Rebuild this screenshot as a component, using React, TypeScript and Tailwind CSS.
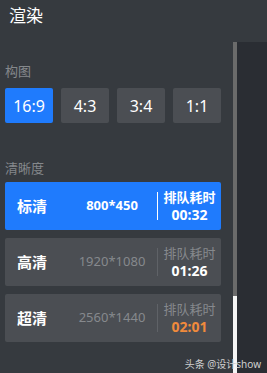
import React from 'react';

const ratios = ['16:9', '4:3', '3:4', '1:1'];

const qualities = [
  { name: '标清', size: '800*450', time: '00:32', active: true, timeColor: 'text-white' },
  { name: '高清', size: '1920*1080', time: '01:26', active: false, timeColor: 'text-white' },
  { name: '超清', size: '2560*1440', time: '02:01', active: false, timeColor: 'text-[#f08a3c]' },
];

const font = { fontFamily: '"Noto Sans", "Noto Sans CJK SC", sans-serif' };

export default function App() {
  return (
    <div className="relative w-[267px] h-[373px] bg-[#363a3f] flex flex-col overflow-hidden" style={font}>
      <div className="h-[42px] shrink-0 pl-[9px] pt-[5px] text-[17px] leading-[22px] text-white">渲染</div>
      <div className="flex flex-1">
        <div className="w-[233px] pl-[5px] pr-[12px]">
          <div className="mt-[20px] h-[18px] text-[13px] leading-[18px] text-[#85888c]">构图</div>
          <div className="mt-[8px] flex gap-[8px]">
            {ratios.map((r, i) => (
              <div
                key={r}
                className={
                  'w-[48px] h-[35px] rounded-[2px] flex items-center justify-center text-[16px] text-white ' +
                  (i === 0 ? 'bg-[#1f7bfd]' : 'bg-[#4b4e53]')
                }
              >
                {r}
              </div>
            ))}
          </div>
          <div className="mt-[36px] h-[18px] text-[13px] leading-[18px] text-[#85888c]">清晰度</div>
          <div className="mt-[5px] flex flex-col gap-[8px]">
            {qualities.map((q) => (
              <div
                key={q.name}
                className={
                  'h-[48px] rounded-[2px] flex items-center ' + (q.active ? 'bg-[#1f7bfd]' : 'bg-[#4b4e53]')
                }
              >
                <div className="w-[62px] pl-[12px] text-[15px] font-bold text-white">{q.name}</div>
                <div
                  className={
                    'w-[90px] text-center text-[13px] ' +
                    (q.active ? 'font-bold text-white' : 'text-[#86898d]')
                  }
                >
                  {q.size}
                </div>
                <div className={'w-px h-[28px] ' + (q.active ? 'bg-white' : 'bg-[#5f6267]')} />
                <div className="flex-1 flex flex-col items-center leading-[17px]">
                  <span className={'text-[13px] ' + (q.active ? 'font-bold text-white' : 'text-[#86898d]')}>排队耗时</span>
                  <span className={'text-[14px] font-bold ' + q.timeColor}>{q.time}</span>
                </div>
              </div>
            ))}
          </div>
        </div>
        <div className="w-[4px] flex flex-col">
          <div className="h-[254px] bg-[#6b6b6b]" />
          <div className="flex-1 bg-[#f5f5f5]" />
        </div>
        <div className="flex-1 bg-[#2a2d33]" />
      </div>
      <div className="absolute right-[6px] bottom-[3px] text-[10px] leading-[12px] text-[#cfcfcf]">头条 @设计show</div>
    </div>
  );
}
